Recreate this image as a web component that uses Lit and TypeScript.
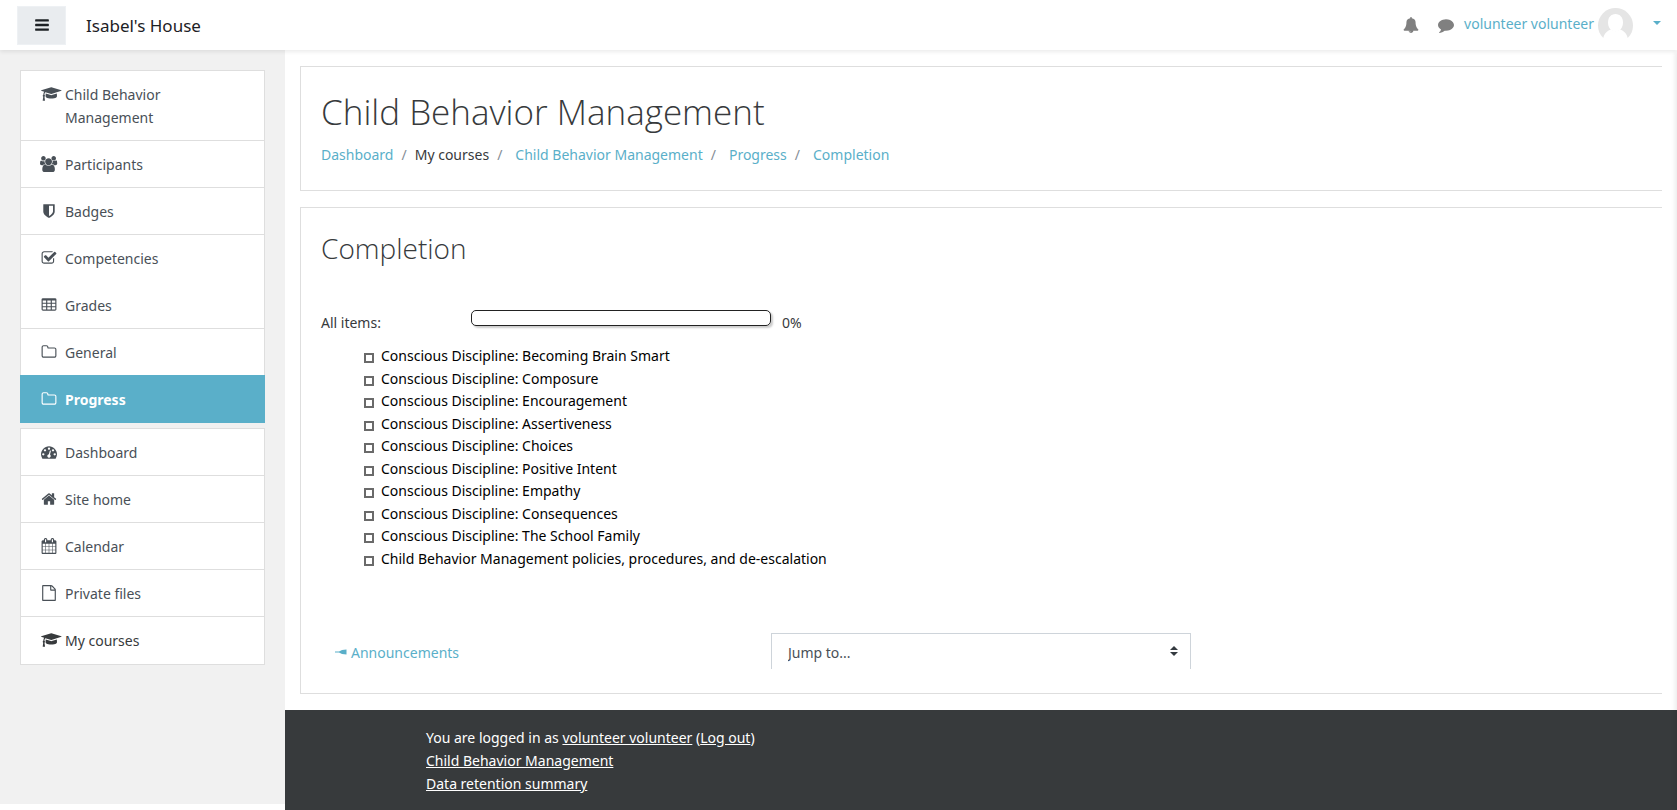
import { LitElement, html, svg, css } from "lit";
import { customElement, property } from "lit/decorators.js";
import { classMap } from "lit/directives/class-map.js";

const link = css`
  a {
    color: #5aafc9;
    text-decoration: none;
  }
`;

const ICONS: Record<string, { w: number; d: string }> = {
  bars: { w: 1792, d: "M1664 1344v128q0 26-19 45t-45 19h-1408q-26 0-45-19t-19-45v-128q0-26 19-45t45-19h1408q26 0 45 19t19 45zm0-512v128q0 26-19 45t-45 19h-1408q-26 0-45-19t-19-45v-128q0-26 19-45t45-19h1408q26 0 45 19t19 45zm0-512v128q0 26-19 45t-45 19h-1408q-26 0-45-19t-19-45v-128q0-26 19-45t45-19h1408q26 0 45 19t19 45z" },
  cap: { w: 2304, d: "M1774 836l18 316q4 69-82 128t-235 93.5-323 34.5-323-34.5-235-93.5-82-128l18-316 574 181q22 7 48 7t48-7zm530-324q0 23-22 31l-1120 352q-4 1-10 1t-10-1l-652-206q-43 34-71 111.5t-34 178.5q63 36 63 109 0 69-58 107l58 433q2 14-8 25-9 11-24 11h-192q-15 0-24-11-10-11-8-25l58-433q-58-38-58-107 0-73 65-111 11-207 98-330l-333-104q-22-8-22-31t22-31l1120-352q4-1 10-1t10 1l1120 352q22 8 22 31z" },
  users: { w: 1920, d: "M593 896q-162 5-265 128h-134q-82 0-138-40.5t-56-118.5q0-353 124-353 6 0 43.5 21t97.5 42.5 119 21.5q67 0 133-23-5 37-5 66 0 159 93 287zm1071 637q0 120-73 189.5t-194 69.5h-874q-121 0-194-69.5t-73-189.5q0-53 3.5-103.5t14-109 26.5-108.5 43-97.5 62-81 85.5-53.5 111.5-20q10 0 43 21.5t73 48 107 48 135 21.5 135-21.5 107-48 73-48 43-21.5q61 0 111.5 20t85.5 53.5 62 81 43 97.5 26.5 108.5 14 109 3.5 103.5zm-1024-1277q0 106-75 181t-181 75-181-75-75-181 75-181 181-75 181 75 75 181zm704 384q0 159-112.5 271.5t-271.5 112.5-271.5-112.5-112.5-271.5 112.5-271.5 271.5-112.5 271.5 112.5 112.5 271.5zm576 225q0 78-56 118.5t-138 40.5h-134q-103-123-265-128 93-128 93-287 0-29-5-66 66 23 133 23 59 0 119-21.5t97.5-42.5 43.5-21q124 0 124 353zm-128-609q0 106-75 181t-181 75-181-75-75-181 75-181 181-75 181 75 75 181z" },
  shield: { w: 1792, d: "M1344 960v-640h-448v1137q119-63 213-137 235-184 235-360zm192-768v768q0 86-33.5 170.5t-83 150-118 127.5-126.5 103-121 77.5-89.5 49.5-42.5 20q-12 6-26 6t-26-6q-16-7-42.5-20t-89.5-49.5-121-77.5-126.5-103-118-127.5-83-150-33.5-170.5v-768q0-26 19-45t45-19h1152q26 0 45 19t19 45z" },
  check: { w: 1792, d: "M1472 930v318q0 119-84.5 203.5t-203.5 84.5h-832q-119 0-203.5-84.5t-84.5-203.5v-832q0-119 84.5-203.5t203.5-84.5h832q63 0 117 25 15 7 18 23 3 17-9 29l-49 49q-10 10-23 10-3 0-9-2-23-6-45-6h-832q-66 0-113 47t-47 113v832q0 66 47 113t113 47h832q66 0 113-47t47-113v-254q0-13 9-22l64-64q10-10 23-10 6 0 12 3 20 8 20 29zm231-489l-814 814q-24 24-57 24t-57-24l-430-430q-24-24-24-57t24-57l110-110q24-24 57-24t57 24l263 263 647-647q24-24 57-24t57 24l110 110q24 24 24 57t-24 57z" },
  table: { w: 1792, d: "M224 128h1344q66 0 113 47t47 113v1088q0 66-47 113t-113 47h-1344q-66 0-113-47t-47-113v-1088q0-66 47-113t113-47zM192 384v256h384v-256zM704 384v256h384v-256zM1216 384v256h384v-256zM192 768v256h384v-256zM704 768v256h384v-256zM1216 768v256h384v-256zM192 1152v256h384v-256zM704 1152v256h384v-256zM1216 1152v256h384v-256z" },
  folder: { w: 1792, d: "M1600 1312v-704q0-40-28-68t-68-28h-704q-40 0-68-28t-28-68v-64q0-40-28-68t-68-28h-320q-40 0-68 28t-28 68v960q0 40 28 68t68 28h1216q40 0 68-28t28-68zm128-704v704q0 92-66 158t-158 66h-1216q-92 0-158-66t-66-158v-960q0-92 66-158t158-66h320q92 0 158 66t66 158v32h672q92 0 158 66t66 158z" },
  dash: { w: 1792, d: "M384 1152q0-53-37.5-90.5t-90.5-37.5-90.5 37.5-37.5 90.5 37.5 90.5 90.5 37.5 90.5-37.5 37.5-90.5zm192-448q0-53-37.5-90.5t-90.5-37.5-90.5 37.5-37.5 90.5 37.5 90.5 90.5 37.5 90.5-37.5 37.5-90.5zm428 481l101-382q6-26-7.5-48.5t-38.5-29.5-48 6.5-30 39.5l-101 382q-60 5-107 43.5t-63 98.5q-20 77 20 146t117 89 146-20 89-117q16-60-6-117t-72-91zm660-33q0-53-37.5-90.5t-90.5-37.5-90.5 37.5-37.5 90.5 37.5 90.5 90.5 37.5 90.5-37.5 37.5-90.5zm-640-640q0-53-37.5-90.5t-90.5-37.5-90.5 37.5-37.5 90.5 37.5 90.5 90.5 37.5 90.5-37.5 37.5-90.5zm448 192q0-53-37.5-90.5t-90.5-37.5-90.5 37.5-37.5 90.5 37.5 90.5 90.5 37.5 90.5-37.5 37.5-90.5zm320 448q0 261-141 483-19 29-54 29h-1402q-35 0-54-29-141-221-141-483 0-182 71-348t191-286 286-191 348-71 348 71 286 191 191 286 71 348z" },
  home: { w: 1792, d: "M1472 992v480q0 26-19 45t-45 19h-384v-384h-256v384h-384q-26 0-45-19t-19-45v-480q0-1 .5-3t.5-3l575-474 575 474q1 2 1 6zm223-69l-62 74q-8 9-21 11h-3q-13 0-21-7l-692-577-692 577q-12 8-24 7-13-2-21-11l-62-74q-8-10-7-23.5t11-21.5l719-599q32-26 76-26t76 26l244 204v-195q0-14 9-23t23-9h192q14 0 23 9t9 23v408l219 182q10 8 11 21.5t-7 23.5z" },
  calendar: { w: 1792, d: "M192 1664h288v-288h-288v288zm352 0h320v-288h-320v288zm-352-352h288v-320h-288v320zm352 0h320v-320h-320v320zm-352-384h288v-288h-288v288zm736 736h320v-288h-320v288zm-384-736h320v-288h-320v288zm768 736h288v-288h-288v288zm-384-352h320v-320h-320v320zm-352-864v-288q0-13-9.5-22.5t-22.5-9.5h-64q-13 0-22.5 9.5t-9.5 22.5v288q0 13 9.5 22.5t22.5 9.5h64q13 0 22.5-9.5t9.5-22.5zm736 864h288v-320h-288v320zm-384-384h320v-288h-320v288zm384 0h288v-288h-288v288zm32-480v-288q0-13-9.5-22.5t-22.5-9.5h-64q-13 0-22.5 9.5t-9.5 22.5v288q0 13 9.5 22.5t22.5 9.5h64q13 0 22.5-9.5t9.5-22.5zm384-64v1280q0 52-38 90t-90 38h-1408q-52 0-90-38t-38-90v-1280q0-52 38-90t90-38h128v-96q0-66 47-113t113-47h64q66 0 113 47t47 113v96h384v-96q0-66 47-113t113-47h64q66 0 113 47t47 113v96h128q52 0 90 38t38 90z" },
  file: { w: 1792, d: "M1596 380q28 28 48 76t20 88v1152q0 40-28 68t-68 28h-1344q-40 0-68-28t-28-68v-1600q0-40 28-68t68-28h896q40 0 88 20t76 48zm-444-244v376h376q-10-29-22-41l-313-313q-12-12-41-22zm384 1528v-1024h-416q-40 0-68-28t-28-68v-416h-768v1536h1280z" },
  bell: { w: 1792, d: "M912 1696q0-16-16-16-59 0-101.5-42.5t-42.5-101.5q0-16-16-16t-16 16q0 73 51.5 124.5t124.5 51.5q16 0 16-16zm816-288q0 52-38 90t-90 38h-448q0 106-75 181t-181 75-181-75-75-181h-448q-52 0-90-38t-38-90q50-42 91-88t85-119.5 74.5-158.5 50-206 19.5-260q0-152 117-282.5t307-158.5q-8-19-8-39 0-40 28-68t68-28 68 28 28 68q0 20-8 39 190 28 307 158.5t117 282.5q0 139 19.5 260t50 206 74.5 158.5 85 119.5 91 88z" },
  comment: { w: 1792, d: "M1792 896q0 174-120 321.5t-326 233-450 85.5q-70 0-145-8-198 175-460 242-49 14-114 22-17 2-30.5-9t-17.5-29v-1q-3-4-.5-12t2-10 4.5-9.5l6-9 7-8.5 8-9q7-8 31-34.5t34.5-38 31-39.5 32.5-51 27-59 26-76q-157-89-247.5-220t-90.5-281q0-130 71-248.5t191-204.5 286-136.5 348-50.5q244 0 450 85.5t326 233 120 321.5z" },
};

@customElement("fa-icon")
class FaIcon extends LitElement {
  @property() name = "bars";

  static styles = css`
    :host {
      display: block;
      height: 16px;
    }
    .glyph {
      display: block;
      height: 100%;
      fill: currentColor;
      fill-rule: evenodd;
    }
  `;

  render() {
    const { w, d } = ICONS[this.name];
    return html`<svg class="glyph" viewBox="0 0 ${w} 1792" aria-hidden="true">${svg`<path d=${d}></path>`}</svg>`;
  }
}

@customElement("site-navbar")
class SiteNavbar extends LitElement {
  static styles = [
    link,
    css`
      :host {
        display: block;
        position: relative;
        z-index: 2;
      }
      .bar {
        display: flex;
        align-items: center;
        height: 50px;
        box-sizing: border-box;
        padding: 0 16px 0 17px;
        background: #fff;
        box-shadow: 0 2px 4px rgba(0, 0, 0, 0.08);
      }
      .toggle {
        display: grid;
        place-items: center;
        width: 49px;
        height: 39px;
        margin: 0;
        padding: 0 0 1px;
        border: 1px solid #eef1f4;
        background: #e9ecef;
        color: #1d2125;
        cursor: pointer;
      }
      .brand {
        margin: 2px auto 0 20px;
        color: #1d2125;
        font-size: 17px;
        line-height: 28px;
      }
      .tools {
        display: flex;
        align-items: center;
      }
      .tool {
        padding: 0;
        border: 0;
        background: none;
        color: #808080;
        cursor: pointer;
      }
      .bell {
        margin-right: 19px;
      }
      .user {
        display: flex;
        align-items: center;
        margin-left: 10px;
      }
      .name {
        padding-bottom: 2px;
        line-height: 22px;
      }
      .avatar {
        display: block;
        width: 35px;
        height: 35px;
        margin-left: 4px;
      }
      .caret {
        width: 0;
        margin-left: 20px;
        margin-bottom: 4px;
        border: 4px solid transparent;
        border-top-color: #5aafc9;
        border-bottom: 0;
      }
    `,
  ];

  render() {
    return html`
      <nav class="bar">
        <button class="toggle" aria-label="Side panel"><fa-icon name="bars"></fa-icon></button>
        <a class="brand" href="#">Isabel's House</a>
        <div class="tools">
          <button class="tool bell" aria-label="Notifications"><fa-icon name="bell"></fa-icon></button>
          <button class="tool" aria-label="Messages"><fa-icon name="comment"></fa-icon></button>
          <a class="user" href="#">
            <span class="name">volunteer volunteer</span>
            <svg class="avatar" viewBox="0 0 35 35" aria-hidden="true">
              <circle cx="17.5" cy="17.5" r="17.5" fill="#e5e5e5"></circle>
              <path d="M17.5 6C22 6 25 9.500 25 14.500C25 19.500 22 23.500 17.500 23.500S10 19.500 10 14.500C10 9.500 13 6 17.500 6z" fill="#fff"></path>
              <path d="M5 35V31C6 26 9 22.500 13 21.500Q17.500 25 22 21.500C26 22.500 29 26 30 31V35z" fill="#fff"></path>
            </svg>
            <span class="caret"></span>
          </a>
        </div>
      </nav>
    `;
  }
}

interface NavItem {
  icon: string;
  label: string;
  state?: "active" | "joined" | "strong";
}

const COURSE_NAV: NavItem[] = [
  { icon: "cap", label: "Child Behavior Management" },
  { icon: "users", label: "Participants" },
  { icon: "shield", label: "Badges" },
  { icon: "check", label: "Competencies" },
  { icon: "table", label: "Grades", state: "joined" },
  { icon: "folder", label: "General" },
  { icon: "folder", label: "Progress", state: "active" },
];

const SITE_NAV: NavItem[] = [
  { icon: "dash", label: "Dashboard" },
  { icon: "home", label: "Site home" },
  { icon: "calendar", label: "Calendar" },
  { icon: "file", label: "Private files" },
  { icon: "cap", label: "My courses", state: "strong" },
];

@customElement("nav-drawer")
class NavDrawer extends LitElement {
  static styles = css`
    :host {
      display: block;
      box-sizing: border-box;
      padding: 20px;
      background: #f1f1f1;
    }
    .group {
      border: 1px solid #dedede;
      border-top: 0;
      background: #fff;
    }
    .group + .group {
      margin-top: 5px;
    }
    .item {
      display: grid;
      grid-template-columns: 16px 1fr;
      column-gap: 8px;
      padding: 12px 20px 11px;
      border-top: 1px solid #dedede;
      color: #495057;
      line-height: 23px;
      text-decoration: none;
    }
    .label {
      max-width: 120px;
    }
    .icon {
      display: grid;
      justify-content: center;
      align-items: center;
      height: 22px;
    }
    .wide {
      justify-content: start;
    }
    .joined {
      border-top-color: #fff;
    }
    .strong {
      padding-bottom: 12px;
      color: #373a3c;
    }
    .active {
      margin: 0 -1px -1px;
      padding: 12px 21px;
      border-color: #5aafc9;
      background: #5aafc9;
      color: #fff;
      font-weight: 700;
    }
  `;

  item({ icon, label, state }: NavItem) {
    return html`
      <a class=${classMap({ item: true, [state ?? "plain"]: true })} href="#">
        <span class=${classMap({ icon: true, wide: icon === "cap" })}><fa-icon name=${icon}></fa-icon></span>
        <span class="label">${label}</span>
      </a>
    `;
  }

  render() {
    return html`
      <nav class="group" aria-label="Course">${COURSE_NAV.map((i) => this.item(i))}</nav>
      <nav class="group" aria-label="Site">${SITE_NAV.map((i) => this.item(i))}</nav>
    `;
  }
}

@customElement("course-header")
class CourseHeader extends LitElement {
  static styles = [
    link,
    css`
      :host {
        display: block;
      }
      .title {
        margin: 0;
        font: 300 35px/45px "Open Sans", "Noto Sans", sans-serif;
      }
      .crumbs {
        display: flex;
        flex-wrap: wrap;
        margin: 9px 0 0;
        padding: 0;
        list-style: none;
        line-height: 23px;
      }
      .crumb + .crumb::before {
        content: "/";
        padding: 0 8px;
        color: #868e96;
      }
      .crumb + .crumb + .crumb::before {
        padding-right: 13px;
      }
    `,
  ];

  render() {
    return html`
      <h1 class="title">Child Behavior Management</h1>
      <nav aria-label="Breadcrumb">
        <ol class="crumbs">
          <li class="crumb"><a href="#">Dashboard</a></li>
          <li class="crumb">My courses</li>
          <li class="crumb"><a href="#">Child Behavior Management</a></li>
          <li class="crumb"><a href="#">Progress</a></li>
          <li class="crumb"><a href="#">Completion</a></li>
        </ol>
      </nav>
    `;
  }
}

const TASKS = [
  "Conscious Discipline: Becoming Brain Smart",
  "Conscious Discipline: Composure",
  "Conscious Discipline: Encouragement",
  "Conscious Discipline: Assertiveness",
  "Conscious Discipline: Choices",
  "Conscious Discipline: Positive Intent",
  "Conscious Discipline: Empathy",
  "Conscious Discipline: Consequences",
  "Conscious Discipline: The School Family",
  "Child Behavior Management policies, procedures, and de-escalation",
];

@customElement("completion-panel")
class CompletionPanel extends LitElement {
  @property({ type: Number }) percent = 0;

  static styles = [
    link,
    css`
      :host {
        display: block;
      }
      .title {
        margin: 0;
        font: 300 28px/36px "Open Sans", "Noto Sans", sans-serif;
      }
      .overall {
        display: flex;
        margin-top: 44px;
        line-height: 23px;
      }
      .caption {
        width: 150px;
      }
      .track {
        box-sizing: border-box;
        width: 300px;
        height: 16px;
        margin-right: 11px;
        border: 1px solid #222;
        border-radius: 5px;
        box-shadow: 2px 2px 2px #ccc;
        overflow: hidden;
      }
      .fill {
        height: 100%;
        background: #5aafc9;
      }
      .value,
      .caption {
        padding-top: 1px;
      }
      .tasks {
        display: grid;
        grid-auto-rows: 1fr;
        min-height: 225px;
        margin: 11px 0 0;
        padding: 0 0 0 43px;
        list-style: none;
        color: #000;
        line-height: 22px;
      }
      .task {
        display: flex;
      }
      .box {
        appearance: none;
        box-sizing: border-box;
        width: 10px;
        height: 10px;
        margin: 8px 7px 0 0;
        border: 2px solid #6a6a6a;
        background: #fff;
      }
      .activity {
        display: grid;
        grid-template-columns: repeat(3, minmax(0, 1fr));
        gap: 30px;
        height: 36px;
        margin-top: 63px;
        overflow: hidden;
      }
      .previous {
        display: flex;
        align-items: center;
        gap: 4px;
        padding-left: 14px;
      }
      .arrow {
        display: block;
        width: 12px;
        height: 8px;
        fill: currentColor;
      }
      .jump {
        position: relative;
        height: 38px;
      }
      .select {
        appearance: none;
        box-sizing: border-box;
        width: 100%;
        height: 38px;
        margin: 0;
        padding: 0 28px 0 16px;
        border: 1px solid #ced4da;
        border-radius: 0;
        background: #fff;
        color: #495057;
        font: inherit;
      }
      .updown {
        position: absolute;
        top: 13px;
        right: 13px;
        width: 8px;
        height: 10px;
        fill: #343a40;
        pointer-events: none;
      }
    `,
  ];

  render() {
    return html`
      <h2 class="title">Completion</h2>
      <div class="overall">
        <span class="caption" id="overall">All items:</span>
        <div class="track" role="progressbar" aria-labelledby="overall" aria-valuenow=${this.percent}>
          <div class="fill" style="width: ${this.percent}%"></div>
        </div>
        <span class="value">${this.percent}%</span>
      </div>
      <ul class="tasks">
        ${TASKS.map(
          (t, i) => html`<li class="task">
            <input class="box" type="checkbox" id="task-${i}" />
            <label for="task-${i}">${t}</label>
          </li>`
        )}
      </ul>
      <div class="activity">
        <a class="previous" href="#">
          <svg class="arrow" viewBox="0 0 12 8" aria-hidden="true"><path d="M0 3.500H4L7 2L11.500 1.500V6.500L7 6L4 4.500H0z"></path></svg>
          <span>Announcements</span>
        </a>
        <div class="jump">
          <select class="select" aria-label="Jump to...">
            <option>Jump to...</option>
          </select>
          <svg class="updown" viewBox="0 0 8 10" aria-hidden="true"><path d="M0 4L4 0L8 4zM0 6H8L4 10z"></path></svg>
        </div>
      </div>
    `;
  }
}

@customElement("site-footer")
class SiteFooter extends LitElement {
  static styles = css`
    :host {
      display: block;
      padding: 16px 141px 15px;
      background: #373a3c;
      color: #fff;
      line-height: 23px;
    }
    a {
      color: #fff;
    }
  `;

  render() {
    return html`
      <div>You are logged in as <a href="#">volunteer volunteer</a> (<a href="#">Log out</a>)</div>
      <div><a href="#">Child Behavior Management</a></div>
      <div><a href="#">Data retention summary</a></div>
    `;
  }
}

@customElement("app-root")
class AppRoot extends LitElement {
  static styles = css`
    :host {
      display: flex;
      flex-direction: column;
      min-height: 100vh;
      overflow: hidden;
      background: #fff;
      color: #373a3c;
      font-family: "Noto Sans", "Open Sans", sans-serif;
      font-size: 14px;
    }
    .body {
      position: relative;
      display: grid;
      grid-template-columns: 285px minmax(0, 1fr);
      flex: 1;
    }
    .body::after {
      content: "";
      position: absolute;
      top: 0;
      bottom: 0;
      left: 100%;
      width: 10px;
      box-shadow: -2px 2px 4px rgba(0, 0, 0, 0.08);
    }
    .drawer {
      margin-bottom: 6px;
    }
    .page {
      display: flex;
      flex-direction: column;
    }
    .card {
      margin: 16px 15px 0;
      padding: 22px 21px 24px 20px;
      border: 1px solid #dedede;
      border-right: 0;
    }
    .footer {
      flex: 1;
      margin-top: 16px;
    }
  `;

  render() {
    return html`
      <site-navbar></site-navbar>
      <div class="body">
        <nav-drawer class="drawer"></nav-drawer>
        <main class="page">
          <course-header class="card"></course-header>
          <completion-panel class="card" percent="0"></completion-panel>
          <site-footer class="footer"></site-footer>
        </main>
      </div>
    `;
  }
}
